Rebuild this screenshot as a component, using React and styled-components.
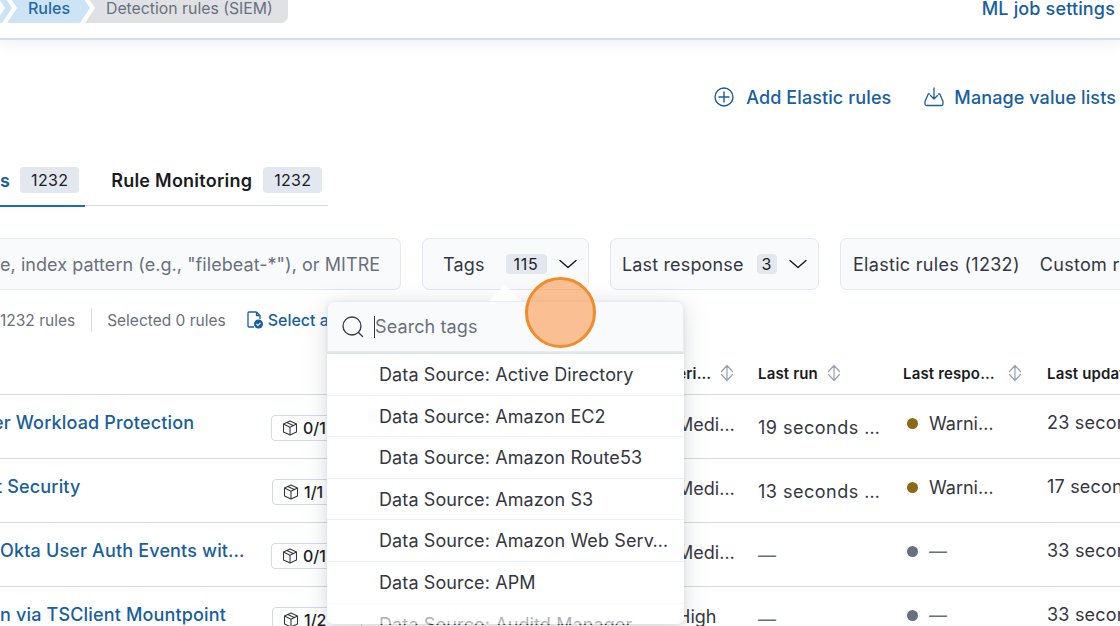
import React from 'react'
import styled, { createGlobalStyle } from 'styled-components'

const GlobalStyle = createGlobalStyle`
  html, body {
    margin: 0;
    padding: 0;
    background: #fff;
  }
  body {
    font-family: Inter, "Liberation Sans", sans-serif;
    color: #343741;
  }
`

const Page = styled.div`
  position: relative;
  width: 1120px;
  height: 626px;
  overflow: hidden;
  background: #fff;
`

const Header = styled.header`
  display: flex;
  justify-content: space-between;
  height: 38px;
  padding-right: 5px;
  border-bottom: 2px solid #d8dce3;
  box-shadow: 0 6px 12px rgba(152, 162, 179, 0.12);
`

const Crumbs = styled.nav`
  display: flex;
  height: 30px;
  margin-top: -7px;
`

const Crumb = styled.div`
  display: flex;
  align-items: center;
  box-sizing: border-box;
  height: 30px;
  margin-left: -5px;
  font-size: ${p => (p.$current ? '15.8px' : '16px')};
  font-weight: ${p => (p.$current ? 400 : 500)};
  color: ${p => (p.$current ? '#69707d' : '#1f6aa8')};
  background: ${p => (p.$current ? '#e0e1e5' : '#cce4f5')};
  clip-path: ${p => p.$current
    ? 'polygon(0 0, 100% 0, 100% 100%, 0 100%, 10px 50%)'
    : 'polygon(0 0, calc(100% - 10px) 0, 100% 50%, calc(100% - 10px) 100%, 0 100%, 10px 50%)'};
  border-radius: 0 7px 7px 0;
`

const RootCrumb = styled(Crumb)`
  width: 17px;
`

const RulesCrumb = styled(Crumb)`
  width: 83px;
  padding-left: 21px;
`

const SiemCrumb = styled(Crumb)`
  width: 203px;
  padding-left: 21px;
`

const HeaderLink = styled.a`
  font-size: 18px;
  font-weight: 500;
  line-height: 22px;
  letter-spacing: 0.15px;
  margin-top: -2px;
  color: #17609e;
`

const Actions = styled.div`
  display: flex;
  justify-content: flex-end;
  gap: 33px;
  height: 24px;
  margin-top: 45px;
  padding-right: 4px;
`

const ActionLink = styled.a`
  display: flex;
  align-items: center;
  gap: ${p => p.$gap}px;
  font-size: 18px;
  font-weight: 500;
  letter-spacing: 0.1px;
  color: #17609e;
`

const Tabs = styled.div`
  display: flex;
  width: 328px;
  height: 38px;
  margin-top: 58px;
  border-bottom: 1px solid #d3dae6;
`

const Tab = styled.div`
  display: flex;
  align-items: flex-start;
  gap: ${p => (p.$active ? '10px' : '11px')};
  height: 38px;
  padding-right: ${p => (p.$active ? '6px' : '0')};
  margin-left: ${p => (p.$active ? '0' : '26px')};
  font-size: 18px;
  font-weight: 600;
  line-height: 27px;
  letter-spacing: 0.25px;
  color: ${p => (p.$active ? '#17609e' : '#1a1c21')};
  border-bottom: ${p => (p.$active ? '2px solid #1a6fb0' : '0')};
`

const CountBadge = styled.span`
  display: inline-block;
  flex: none;
  box-sizing: border-box;
  width: ${p => p.$width}px;
  height: ${p => p.$height}px;
  text-align: center;
  font-size: 16px;
  font-weight: 400;
  line-height: ${p => p.$height}px;
  letter-spacing: ${p => p.$spacing || 0.3}px;
  color: #1a1c21;
  background: #e2e7f0;
  border-radius: 4px;
`

const Filters = styled.div`
  display: flex;
  gap: 21px;
  height: 52px;
  margin-top: 32px;
`

const FilterBox = styled.div`
  display: flex;
  flex: none;
  align-items: center;
  box-sizing: border-box;
  height: 52px;
  background: #f9fafc;
  border: 1px solid #e4e8ef;
  border-radius: 7px;
  font-size: 18px;
  letter-spacing: 0.15px;
  color: #343741;
`

const SearchBox = styled(FilterBox)`
  width: 401px;
  border-left: 0;
  border-radius: 0 7px 7px 0;
  letter-spacing: 0.05px;
  color: #69707d;
  white-space: nowrap;
`

const PickerBox = styled(FilterBox)`
  width: ${p => p.$width}px;
  padding-left: ${p => p.$pad}px;
  gap: 11px;
`

const PickerLabel = styled.span`
  margin-right: ${p => p.$space}px;
`

const RuleTypeBox = styled(FilterBox)`
  width: 320px;
  padding-left: 12px;
  gap: 20px;
  letter-spacing: 0.3px;
  white-space: nowrap;
`

const Stats = styled.div`
  display: flex;
  align-items: center;
  height: 36px;
  margin-top: 12px;
  font-size: 15.5px;
  color: #69707d;
  white-space: nowrap;
`

const StatDivider = styled.span`
  width: 1px;
  height: 24px;
  margin: 0 15px 0 16px;
  background: #d3dae6;
`

const SelectAll = styled.a`
  display: flex;
  align-items: center;
  gap: 5px;
  margin-left: 21px;
  font-size: 16px;
  font-weight: 500;
  color: #17609e;
`

const TableRow = styled.div`
  display: grid;
  grid-template-columns: 271px 379px 108px 145px 144px 100px;
  height: 63px;
  border-bottom: 1px solid #d3dae6;
  white-space: nowrap;
`

const HeadRow = styled(TableRow)`
  align-items: center;
  height: 30px;
  padding-bottom: 6px;
  margin-top: 20px;
`

const HeadCell = styled.div`
  display: flex;
  align-items: center;
  gap: ${p => p.$gap}px;
  grid-column: ${p => p.$col};
  font-size: 15px;
  font-weight: 600;
  letter-spacing: 0.15px;
  color: #1a1c21;
`

const NameCell = styled.a`
  grid-column: 1;
  margin-left: ${p => p.$shift || 0}px;
  padding-top: 15px;
  font-size: 18px;
  font-weight: 500;
  line-height: 26px;
  letter-spacing: 0.16px;
  color: #17609e;
`

const VersionCell = styled.div`
  grid-column: 2;
`

const VersionBadge = styled.div`
  display: flex;
  align-items: center;
  gap: 5px;
  box-sizing: border-box;
  width: 90px;
  height: 26px;
  margin: 20px 0 0 ${p => p.$nudge || 0}px;
  padding-left: 10px;
  border: 1px solid #d3dae6;
  border-radius: 4px;
  font-size: 16px;
  font-weight: 500;
  color: #1a1c21;
`

const PlainCell = styled.div`
  grid-column: ${p => p.$col};
  display: flex;
  align-items: center;
  gap: 11px;
  height: 26px;
  margin-top: ${p => p.$top}px;
  font-size: 18px;
  letter-spacing: ${p => p.$spacing}px;
  color: ${p => (p.$dim ? '#69707d' : '#343741')};
`

const Dot = styled.span`
  flex: none;
  width: 11px;
  height: 11px;
  margin-left: 4px;
  border-radius: 50%;
  background: ${p => p.$color};
`

const SeverityDot = styled(Dot)`
  margin-left: 0;
  margin-right: 5px;
`

const Popover = styled.div`
  position: absolute;
  left: 327px;
  top: 301px;
  width: 357px;
  height: 323px;
  background: #fff;
  border-radius: 7px;
  box-shadow: 0 4px 24px rgba(90, 100, 120, 0.22), 0 1px 4px rgba(90, 100, 120, 0.12);

  &::before {
    content: '';
    position: absolute;
    left: 162px;
    top: -16px;
    border-left: 16px solid transparent;
    border-right: 16px solid transparent;
    border-bottom: 16px solid #fff;
  }

  &::after {
    content: '';
    position: absolute;
    left: 0;
    right: 0;
    bottom: 0;
    height: 22px;
    border-radius: 0 0 7px 7px;
    background: linear-gradient(rgba(255, 255, 255, 0.45), rgba(255, 255, 255, 0.65));
  }
`

const TagSearch = styled.div`
  display: flex;
  align-items: center;
  gap: 10px;
  box-sizing: border-box;
  height: 51px;
  padding-left: 14px;
  background: #f9fafc;
  border: 1px solid #e9edf3;
  border-radius: 7px 7px 0 0;
  font-size: 18px;
  letter-spacing: 0.1px;
  color: #69707d;
`

const Caret = styled.span`
  width: 1px;
  height: 22px;
  margin-right: -10px;
  background: #343741;
`

const TagList = styled.div`
  height: 271px;
  overflow: hidden;
  border-top: 2px solid #dfe3ea;
  border-radius: 0 0 7px 7px;
`

const TagItem = styled.div`
  box-sizing: border-box;
  height: 41.6px;
  padding: 0 15px 0 52px;
  font-size: 18px;
  line-height: 41px;
  letter-spacing: 0.11px;
  color: #343741;
  border-bottom: 1px solid #eef1f6;
  white-space: nowrap;
`

const Spotlight = styled.div`
  position: absolute;
  left: 525px;
  top: 277px;
  box-sizing: border-box;
  width: 71px;
  height: 71px;
  border: 3px solid #f28c28;
  border-radius: 50%;
  background: rgba(250, 150, 70, 0.58);
`

function ChevronDown() {
  return (
    <svg width="20" height="12" viewBox="0 0 20 12" fill="none" stroke="#1a1c21" strokeWidth="1.5" strokeLinecap="round" strokeLinejoin="round">
      <path d="M2 2.5 L10 9.5 L18 2.5" />
    </svg>
  )
}

function SortIcon() {
  return (
    <svg width="14" height="18" viewBox="0 0 14 18" fill="none" stroke="#98a2b3" strokeWidth="1.2" strokeLinejoin="round" strokeLinecap="round">
      <path d="M7 1.5 V16.5 M7 1.5 L1.5 7.5 M7 1.5 L12.5 7.5 M7 16.5 L1.5 10.5 M7 16.5 L12.5 10.5" />
    </svg>
  )
}

function PlusCircle() {
  return (
    <svg width="20" height="20" viewBox="0 0 20 20" fill="none" stroke="#17609e" strokeWidth="1.4" strokeLinecap="round">
      <circle cx="10" cy="10" r="9" />
      <path d="M10 5 V15 M5 10 H15" />
    </svg>
  )
}

function ImportIcon() {
  return (
    <svg width="20" height="20" viewBox="0 0 20 20" fill="none" stroke="#17609e" strokeWidth="1.3" strokeLinecap="round" strokeLinejoin="round">
      <path d="M5.5 7 H4.2 L1 14.5 V17 A1.5 1.5 0 0 0 2.5 18.5 H17.5 A1.5 1.5 0 0 0 19 17 V14.5 L15.8 7 H14.5" />
      <path d="M10 1 V12 M6.5 8.5 L10 12 L13.5 8.5" />
    </svg>
  )
}

function SearchIcon() {
  return (
    <svg width="22" height="22" viewBox="0 0 22 22" fill="none" stroke="#343741" strokeWidth="1.3" strokeLinecap="round">
      <circle cx="10" cy="10" r="9" />
      <path d="M16.5 16.5 L20.5 20.5" />
    </svg>
  )
}

function CubeIcon() {
  return (
    <svg width="16" height="16" viewBox="0 0 16 16" fill="none" stroke="#343741" strokeWidth="1.1" strokeLinejoin="round">
      <path d="M8 1 L14.5 4 V12 L8 15 L1.5 12 V4 Z" />
      <path d="M1.5 4 L8 7.2 L14.5 4 M8 7.2 V15 M4.8 2.6 L11.2 5.6" />
    </svg>
  )
}

function SelectAllIcon() {
  return (
    <svg width="16" height="18" viewBox="0 0 16 18" fill="none">
      <path d="M9.5 1 H2 A1 1 0 0 0 1 2 V15 A1 1 0 0 0 2 16 H7 M9.5 1 L13 4.5 V8 M9.5 1 V4.5 H13" stroke="#17609e" strokeWidth="1.3" />
      <circle cx="11.5" cy="13" r="4.5" fill="#17609e" />
      <path d="M9.5 13 L11 14.5 L13.5 11.8" stroke="#fff" strokeWidth="1.1" />
    </svg>
  )
}

const rows = [
  { name: 'er Workload Protection', shift: -7, version: '0/1', nudge: 0, severity: 'Medi…', run: '19 seconds …', response: 'Warni…', color: '#8a6a14', updated: '23 seconds' },
  { name: 't Security', shift: -4, version: '1/1', nudge: 1, severity: 'Medi…', run: '13 seconds …', response: 'Warni…', color: '#8a6a14', updated: '17 seconds' },
  { name: 'Okta User Auth Events wit…', shift: 0, version: '0/1', nudge: 0, severity: 'Medi…', run: '—', response: '—', color: '#69707d', updated: '33 seconds' },
  { name: 'n via TSClient Mountpoint', shift: 0, version: '1/2', nudge: 1, severity: 'High', run: '—', response: '—', color: '#69707d', updated: '33 seconds' },
]

const tags = [
  'Data Source: Active Directory',
  'Data Source: Amazon EC2',
  'Data Source: Amazon Route53',
  'Data Source: Amazon S3',
  'Data Source: Amazon Web Serv…',
  'Data Source: APM',
  'Data Source: Auditd Manager',
]

export default function App() {
  return (
    <Page>
      <GlobalStyle />
      <Header>
        <Crumbs>
          <RootCrumb />
          <RulesCrumb>Rules</RulesCrumb>
          <SiemCrumb $current>Detection rules (SIEM)</SiemCrumb>
        </Crumbs>
        <HeaderLink>ML job settings</HeaderLink>
      </Header>

      <Actions>
        <ActionLink $gap={12}><PlusCircle />Add Elastic rules</ActionLink>
        <ActionLink $gap={10}><ImportIcon />Manage value lists</ActionLink>
      </Actions>

      <Tabs>
        <Tab $active>s<CountBadge $width={59} $height={26}>1232</CountBadge></Tab>
        <Tab>Rule Monitoring<CountBadge $width={59} $height={26}>1232</CountBadge></Tab>
      </Tabs>

      <Filters>
        <SearchBox>e, index pattern (e.g., "filebeat-*"), or MITRE</SearchBox>
        <PickerBox $width={167} $pad={20}>
          <PickerLabel $space={10}>Tags</PickerLabel>
          <CountBadge $width={41} $height={20} $spacing={0.8}>115</CountBadge>
          <ChevronDown />
        </PickerBox>
        <PickerBox $width={209} $pad={11}>
          <PickerLabel $space={2}>Last response</PickerLabel>
          <CountBadge $width={20} $height={20}>3</CountBadge>
          <ChevronDown />
        </PickerBox>
        <RuleTypeBox><span>Elastic rules (1232)</span><span>Custom rules (0)</span></RuleTypeBox>
      </Filters>

      <Stats>
        <span>1232 rules</span>
        <StatDivider />
        <span>Selected 0 rules</span>
        <SelectAll><SelectAllIcon />Select all 1232 rules</SelectAll>
      </Stats>

      <HeadRow>
        <HeadCell $col={3} $gap={9}>Severi…<SortIcon /></HeadCell>
        <HeadCell $col={4} $gap={9}>Last run<SortIcon /></HeadCell>
        <HeadCell $col={5} $gap={13}>Last respo…<SortIcon /></HeadCell>
        <HeadCell $col={6} $gap={8}>Last updated</HeadCell>
      </HeadRow>

      {rows.map(row => (
        <TableRow key={row.name}>
          <NameCell $shift={row.shift}>{row.name}</NameCell>
          <VersionCell>
            <VersionBadge $nudge={row.nudge}><CubeIcon />{row.version}</VersionBadge>
          </VersionCell>
          <PlainCell $col={3} $top={16} $spacing={0}><SeverityDot $color="#d6a14a" />{row.severity}</PlainCell>
          <PlainCell $col={4} $top={19} $spacing={0.5} $dim={row.run === '—'}>{row.run}</PlainCell>
          <PlainCell $col={5} $top={15} $spacing={0} $dim={row.response === '—'}><Dot $color={row.color} />{row.response}</PlainCell>
          <PlainCell $col={6} $top={14} $spacing={0.2}>{row.updated}</PlainCell>
        </TableRow>
      ))}

      <Popover>
        <TagSearch><SearchIcon /><Caret />Search tags</TagSearch>
        <TagList>
          {tags.map(tag => <TagItem key={tag}>{tag}</TagItem>)}
        </TagList>
      </Popover>
      <Spotlight />
    </Page>
  )
}
